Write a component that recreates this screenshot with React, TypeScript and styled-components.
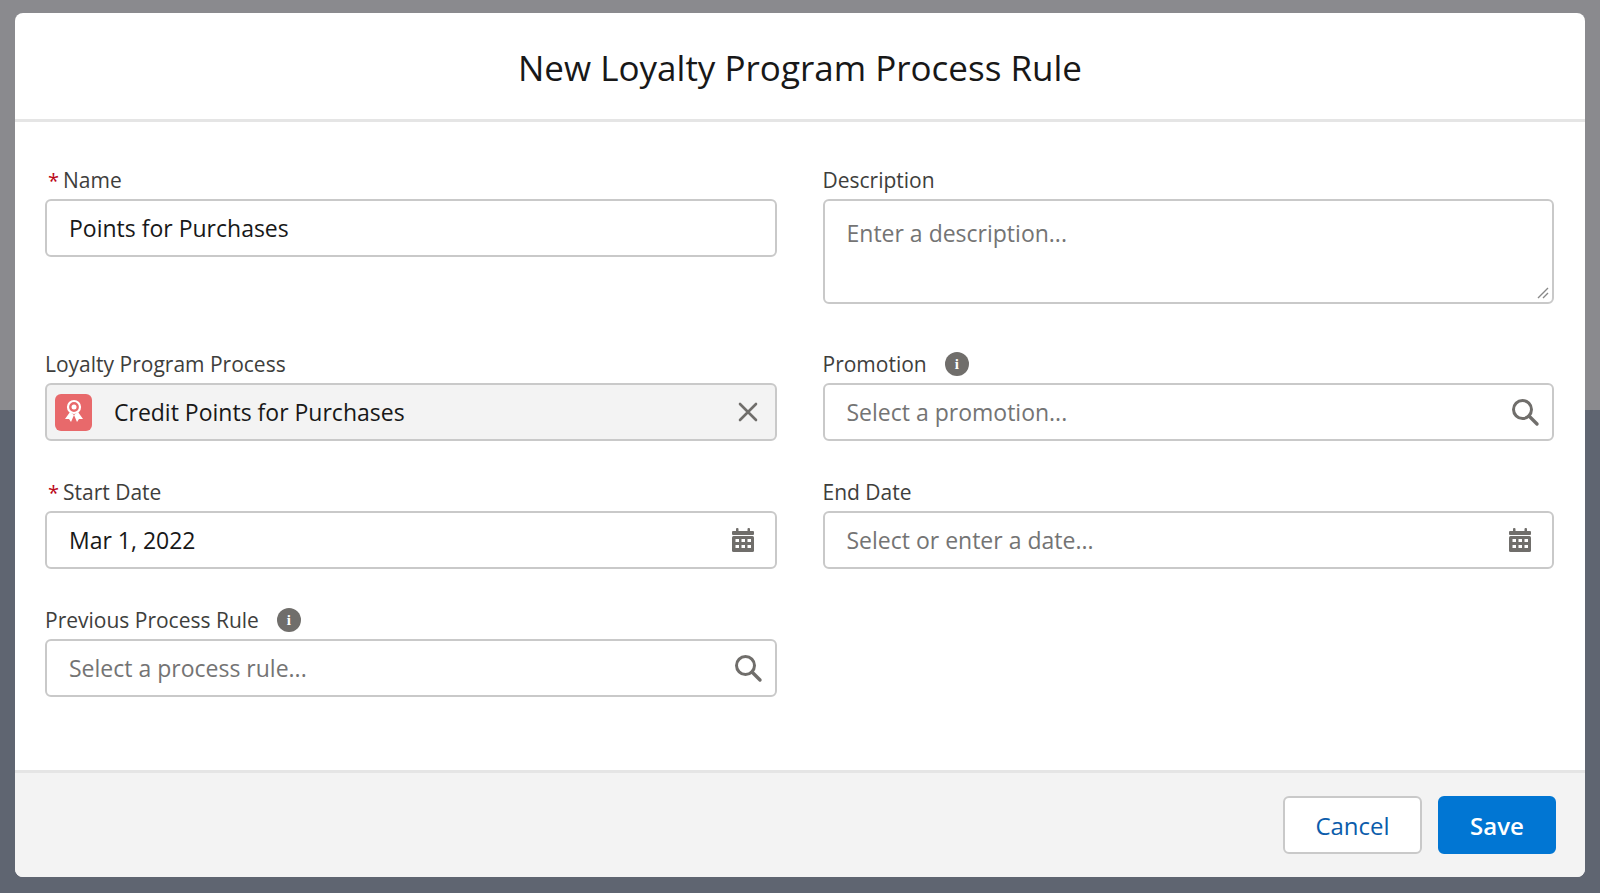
import React from "react";
import styled, { createGlobalStyle } from "styled-components";

const Global = createGlobalStyle`
  html, body { margin: 0; padding: 0; }
  body { font-family: "Open Sans", "Liberation Sans", sans-serif; background: #5f6571; }
  * { box-sizing: border-box; }
`;

const Backdrop = styled.div`
  width: 1600px; height: 893px; position: relative; overflow: hidden;
  background: linear-gradient(#8a8a8e 0, #8a8a8e 410px, #5f6571 410px);
  padding: 13px 15px 16px 15px;
`;
const Modal = styled.div`
  height: 864px; background: #fff; border-radius: 8px; display: flex; flex-direction: column; overflow: hidden;
`;
const Header = styled.div`
  height: 109px; border-bottom: 3px solid #e5e5e5; display: flex; align-items: center; justify-content: center;
  font-size: 35px; color: #181818; padding-top: 2px;
`;
const Body = styled.div`
  flex: 1; padding: 44px 31px 0 30px; display: grid; grid-template-columns: 1fr 1fr; column-gap: 46px; row-gap: 37px;
  align-content: start;
`;
const Field = styled.div<{ $mt?: number }>` display: flex; flex-direction: column; gap: 5px; margin-top: ${p => p.$mt || 0}px; `;
const Label = styled.div`
  height: 28px; display: flex; align-items: center; font-size: 21px; color: #3e3e3c; gap: 4px;
`;
const Req = styled.span` color: #ba0517; font-size: 20px; margin-left: 3px; `;
const Info = styled.span`
  width: 24px; height: 24px; border-radius: 50%; background: #706e6b; color: #fff; font-size: 15px; font-weight: 700;
  display: inline-flex; align-items: center; justify-content: center; margin-left: 14px; font-family: "Liberation Serif", serif;
`;
const Box = styled.div<{ $gray?: boolean; $h?: number }>`
  height: ${p => p.$h || 58}px; border: 2px solid #c9c9c9; border-radius: 6px; background: ${p => (p.$gray ? "#f3f3f3" : "#fff")};
  display: flex; align-items: center; padding: 0 12px 0 22px; font-size: 23px; color: #181818; position: relative;
`;
const Text = styled.span<{ $ph?: boolean }>` flex: 1; color: ${p => (p.$ph ? "#747474" : "#181818")}; `;
const Area = styled(Box)` align-items: flex-start; padding-top: 16px; `;
const Grip = styled.svg` position: absolute; right: 3px; bottom: 3px; `;
const Pill = styled.div`
  width: 37px; height: 37px; border-radius: 6px; background: #e8696b; display: flex; align-items: center; justify-content: center;
  margin: 0 22px 0 -14px;
`;
const Footer = styled.div`
  height: 107px; background: #f3f3f3; border-top: 3px solid #e5e5e5; display: flex; justify-content: flex-end; align-items: center;
  gap: 16px; padding-right: 29px;
`;
const Btn = styled.button<{ $primary?: boolean }>`
  height: 58px; width: ${p => (p.$primary ? 118 : 139)}px; border-radius: 6px; font-size: 24px; font-family: inherit;
  border: 2px solid ${p => (p.$primary ? "#0176d3" : "#c9c9c9")};
  background: ${p => (p.$primary ? "#0176d3" : "#fff")}; color: ${p => (p.$primary ? "#fff" : "#0b5cab")};
  font-weight: ${p => (p.$primary ? 600 : 400)};
`;

const Search = () => (
  <svg width="30" height="30" viewBox="0 0 30 30"><circle cx="12.5" cy="12.5" r="9" fill="none" stroke="#706e6b" strokeWidth="3" /><path d="M19 19l8 8" stroke="#706e6b" strokeWidth="3.4" strokeLinecap="round" /></svg>
);
const Cal = () => (
  <svg width="24" height="26" viewBox="0 0 24 26" style={{ marginRight: 8 }}>
    <rect x="5" y="1" width="2.5" height="5" rx="1" fill="#706e6b" /><rect x="16.5" y="1" width="2.5" height="5" rx="1" fill="#706e6b" />
    <rect x="1" y="4" width="22" height="4" rx="1" fill="#706e6b" />
    <rect x="1" y="9" width="22" height="16" rx="1.5" fill="#706e6b" />
    {[0, 1, 2].map(c => [0, 1].map(r => <rect key={c + "" + r} x={4.5 + c * 6} y={12 + r * 6} width="3.5" height="3" fill="#fff" />))}
  </svg>
);
const X = () => (
  <svg width="22" height="22" viewBox="0 0 22 22" style={{ marginRight: 4 }}><path d="M3 3l16 16M19 3L3 19" stroke="#706e6b" strokeWidth="2.6" strokeLinecap="round" /></svg>
);
const Award = () => (
  <svg width="24" height="26" viewBox="0 0 24 26"><circle cx="12" cy="8" r="6" fill="none" stroke="#fff" strokeWidth="2.2" /><circle cx="12" cy="8" r="2.5" fill="#fff" />
    <path d="M8 13l-5 7h4l2 3 3-7zM16 13l5 7h-4l-2 3-3-7z" fill="#fff" /></svg>
);

export default function App() {
  return (
    <>
      <Global />
      <Backdrop>
        <Modal>
          <Header>New Loyalty Program Process Rule</Header>
          <Body>
            <Field>
              <Label><Req>*</Req>Name</Label>
              <Box><Text>Points for Purchases</Text></Box>
            </Field>
            <Field>
              <Label>Description</Label>
              <Area $h={105}><Text $ph>Enter a description...</Text>
                <Grip width="14" height="14" viewBox="0 0 14 14"><path d="M13 3L3 13M13 8L8 13" stroke="#888" strokeWidth="1.4" /></Grip>
              </Area>
            </Field>
            <Field $mt={9}>
              <Label>Loyalty Program Process</Label>
              <Box $gray><Pill><Award /></Pill><Text>Credit Points for Purchases</Text><X /></Box>
            </Field>
            <Field $mt={9}>
              <Label>Promotion<Info>i</Info></Label>
              <Box><Text $ph>Select a promotion...</Text><Search /></Box>
            </Field>
            <Field>
              <Label><Req>*</Req>Start Date</Label>
              <Box><Text>Mar 1, 2022</Text><Cal /></Box>
            </Field>
            <Field>
              <Label>End Date</Label>
              <Box><Text $ph>Select or enter a date...</Text><Cal /></Box>
            </Field>
            <Field>
              <Label>Previous Process Rule<Info>i</Info></Label>
              <Box><Text $ph>Select a process rule...</Text><Search /></Box>
            </Field>
          </Body>
          <Footer>
            <Btn>Cancel</Btn>
            <Btn $primary>Save</Btn>
          </Footer>
        </Modal>
      </Backdrop>
    </>
  );
}
